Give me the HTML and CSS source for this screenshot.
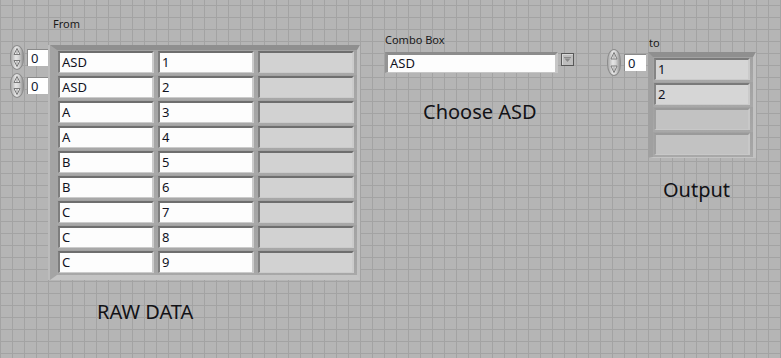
FILE: index.html
```html
<!DOCTYPE html>
<html>
<head>
<meta charset="utf-8">
<link rel="stylesheet" href="styles.css">
</head>
<body>
<div class="panel">
  <div class="label lbl-from">From</div>

  <div class="index idx-1">
    <div class="inc"><svg width="12" height="23" viewBox="0 0 12 23"><path d="M6 2.5 L9 8.5 H3 Z" fill="#ececec" stroke="#7a7a7a"/><line x1="6" y1="4" x2="6" y2="8" stroke="#9a9a9a"/><path d="M6 20.5 L9 14.5 H3 Z" fill="#ececec" stroke="#7a7a7a"/><line x1="6" y1="15" x2="6" y2="19" stroke="#9a9a9a"/></svg></div>
    <div class="num">0</div>
  </div>
  <div class="index idx-2">
    <div class="inc"><svg width="12" height="23" viewBox="0 0 12 23"><path d="M6 2.5 L9 8.5 H3 Z" fill="#ececec" stroke="#7a7a7a"/><line x1="6" y1="4" x2="6" y2="8" stroke="#9a9a9a"/><path d="M6 20.5 L9 14.5 H3 Z" fill="#ececec" stroke="#7a7a7a"/><line x1="6" y1="15" x2="6" y2="19" stroke="#9a9a9a"/></svg></div>
    <div class="num">0</div>
  </div>

  <div class="arr arr-in">
    <div class="cell"><div class="field">ASD</div></div>
    <div class="cell"><div class="field">1</div></div>
    <div class="cell"><div class="field empty"></div></div>
    <div class="cell"><div class="field">ASD</div></div>
    <div class="cell"><div class="field">2</div></div>
    <div class="cell"><div class="field empty"></div></div>
    <div class="cell"><div class="field">A</div></div>
    <div class="cell"><div class="field">3</div></div>
    <div class="cell"><div class="field empty"></div></div>
    <div class="cell"><div class="field">A</div></div>
    <div class="cell"><div class="field">4</div></div>
    <div class="cell"><div class="field empty"></div></div>
    <div class="cell"><div class="field">B</div></div>
    <div class="cell"><div class="field">5</div></div>
    <div class="cell"><div class="field empty"></div></div>
    <div class="cell"><div class="field">B</div></div>
    <div class="cell"><div class="field">6</div></div>
    <div class="cell"><div class="field empty"></div></div>
    <div class="cell"><div class="field">C</div></div>
    <div class="cell"><div class="field">7</div></div>
    <div class="cell"><div class="field empty"></div></div>
    <div class="cell"><div class="field">C</div></div>
    <div class="cell"><div class="field">8</div></div>
    <div class="cell"><div class="field empty"></div></div>
    <div class="cell"><div class="field">C</div></div>
    <div class="cell"><div class="field">9</div></div>
    <div class="cell"><div class="field empty"></div></div>
  </div>

  <div class="big raw">RAW DATA</div>

  <div class="label lbl-combo">Combo Box</div>
  <div class="combo">
    <div class="combo-field">ASD</div>
    <div class="combo-btn"><svg width="11" height="11" viewBox="0 0 11 11"><line x1="2" y1="3.5" x2="9" y2="3.5" stroke="#8a8a8a"/><path d="M2.5 4.5 H8.5 L5.5 8 Z" fill="#8a8a8a"/></svg></div>
  </div>
  <div class="big choose">Choose ASD</div>

  <div class="label lbl-to">to</div>
  <div class="index idx-out">
    <div class="inc"><svg width="12" height="25" viewBox="0 0 12 25"><path d="M6 2.5 L9 9 H3 Z" fill="#ececec" stroke="#7a7a7a"/><line x1="6" y1="4" x2="6" y2="8.5" stroke="#9a9a9a"/><path d="M6 22.5 L9 16 H3 Z" fill="#ececec" stroke="#7a7a7a"/><line x1="6" y1="16.5" x2="6" y2="21" stroke="#9a9a9a"/></svg></div>
    <div class="num">0</div>
  </div>
  <div class="arr arr-out">
    <div class="cell"><div class="field ind">1</div></div>
    <div class="cell"><div class="field ind">2</div></div>
    <div class="cell"><div class="field ind-empty"></div></div>
    <div class="cell"><div class="field ind-empty"></div></div>
  </div>
  <div class="big output">Output</div>
</div>
</body>
</html>
```
FILE: styles.css
```css
html, body {
  margin: 0;
  padding: 0;
}
body {
  width: 781px;
  height: 358px;
  overflow: hidden;
  background-color: #b5b5b5;
  background-image:
    linear-gradient(to right, #a3a3a3 1px, transparent 1px),
    linear-gradient(to bottom, #a3a3a3 1px, transparent 1px);
  background-size: 12px 12px;
  background-position: 0 5px;
  font-family: "Noto Sans", "DejaVu Sans", sans-serif;
  color: #101018;
}
.panel {
  position: relative;
  width: 781px;
  height: 358px;
}
.label {
  position: absolute;
  font-size: 11px;
  line-height: 13px;
  color: #1a1a1a;
}
.lbl-from { left: 53px; top: 17px; }
.lbl-combo { left: 385px; top: 33px; }
.lbl-to { left: 649px; top: 36px; }

.big {
  position: absolute;
  font-size: 20px;
  line-height: 20px;
  color: #121216;
}
.choose { left: 423px; top: 102px; }
.raw { left: 97px; top: 302px; }
.output { left: 663px; top: 180px; }

/* numeric index controls */
.index {
  position: absolute;
  display: flex;
  align-items: center;
  gap: 2px;
}
.idx-1 { left: 10px; top: 45px; }
.idx-2 { left: 10px; top: 73px; }
.idx-out { left: 607px; top: 49px; }
.inc {
  width: 12px;
  height: 23px;
  border: 1px solid #8c8c8c;
  border-radius: 7px / 11px;
  background: linear-gradient(to right, #a9a9a9 0%, #e6e6e6 40%, #d4d4d4 65%, #959595 100%);
  display: flex;
  overflow: hidden;
}
.idx-out .inc { height: 25px; border-radius: 7px / 12px; }
.inc svg { display: block; }
.num {
  width: 20px;
  height: 16px;
  box-sizing: content-box;
  background: #fff;
  border-top: 1px solid #8a8a8a;
  border-left: 1px solid #8a8a8a;
  font-size: 13px;
  line-height: 16px;
  padding-left: 3px;
  margin-left: 1px;
  color: #101830;
}
.idx-out .num { width: 18px; height: 16px; }

/* arrays */
.arr {
  position: absolute;
  display: grid;
  grid-auto-rows: 25px;
  background: #a6a6a6;
}
.arr-in {
  left: 50px;
  top: 45px;
  grid-template-columns: repeat(3, 100px);
  border-top: 5px solid #8f8f8f;
  border-left: 7px solid #a4a4a4;
  border-right: 3px solid #c2c2c2;
  border-bottom: 5px solid #c4c4c4;
  box-shadow: inset 0 0 0 0 transparent, -2px 0 0 -0px #bcbcbc;
}
.arr-out {
  left: 648px;
  top: 52px;
  grid-template-columns: 100px;
  border-top: 5px solid #8f8f8f;
  border-left: 5px solid #a0a0a0;
  border-right: 3px solid #c2c2c2;
  border-bottom: 1px solid #c4c4c4;
}
.cell {
  box-sizing: border-box;
  height: 25px;
  padding: 1px 3px 2px 1px;
  background: linear-gradient(to bottom, #a2a2a2, #a8a8a8);
}
.field {
  box-sizing: border-box;
  height: 100%;
  background: #fdfdfd;
  border-top: 2px solid #6e6e6e;
  border-left: 2px solid #7e7e7e;
  border-right: 2px solid #cbcbcb;
  border-bottom: 1px solid #cbcbcb;
  font-size: 13px;
  line-height: 19px;
  padding-left: 2px;
  color: #10121e;
  white-space: nowrap;
}
.field.empty {
  background: #d2d2d2;
}
.field.ind {
  background: #d6d6d6;
  border-top-color: #7a7a7a;
  border-left-color: #858585;
}
.field.ind-empty {
  background: #c2c2c2;
  border-top: 2px solid #9a9a9a;
  border-left: 2px solid #a0a0a0;
  border-right: 2px solid #c8c8c8;
  border-bottom: 1px solid #c8c8c8;
}

/* combo box */
.combo {
  position: absolute;
  left: 385px;
  top: 52px;
  display: flex;
  align-items: flex-start;
  gap: 3px;
}
.combo-field {
  width: 165px;
  height: 17px;
  padding-left: 2px;
  background: #fdfdfd;
  border-top: 3px solid #8c8c8c;
  border-left: 3px solid #949494;
  border-right: 3px solid #c6c6c6;
  border-bottom: 1px solid #c6c6c6;
  font-size: 13px;
  line-height: 17px;
  color: #10121e;
}
.combo-btn {
  width: 11px;
  height: 11px;
  margin-top: 1px;
  border: 1px solid #585858;
  background: #bdbdbd;
  box-shadow: inset 1px 1px 0 #d8d8d8;
  display: flex;
}
.combo-btn svg { display: block; }
```
